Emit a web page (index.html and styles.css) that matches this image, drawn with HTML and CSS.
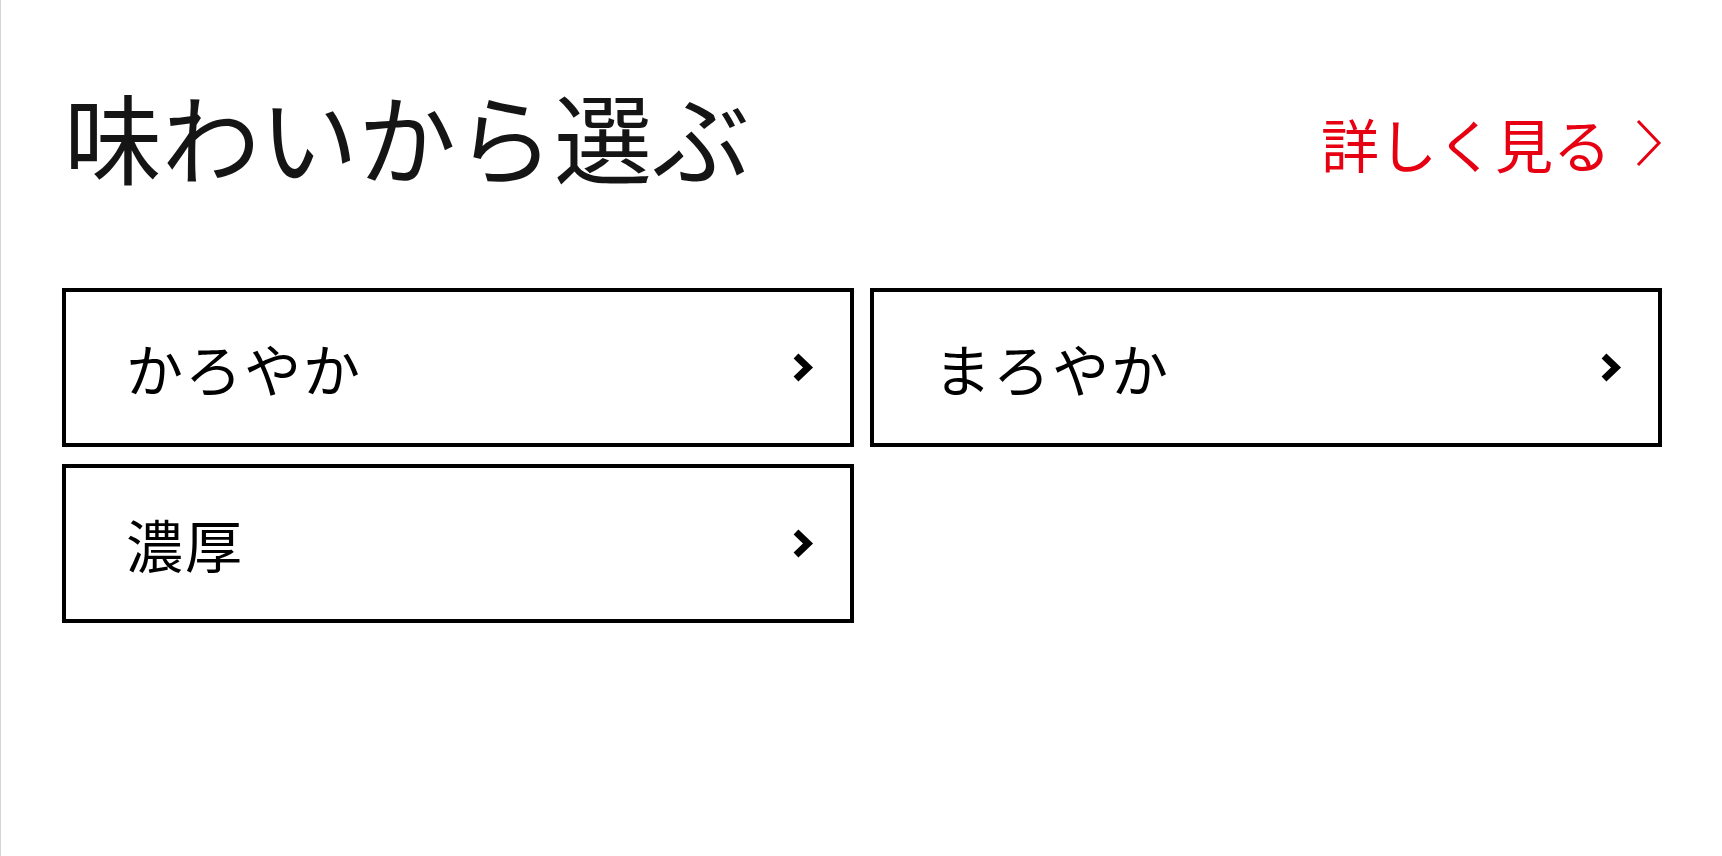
FILE: index.html
```html
<!DOCTYPE html>
<html lang="ja">
<head>
<meta charset="utf-8">
<title>味わいから選ぶ</title>
<link rel="stylesheet" href="styles.css">
</head>
<body>
<div class="page">
  <div class="head">
    <h2 class="title">味わいから選ぶ</h2>
    <a class="more" href="#">詳しく見る<svg class="more-arrow" width="26" height="48" viewBox="0 0 26 48"><polyline points="2,2 23,24 2,46" fill="none" stroke="#e60012" stroke-width="3"/></svg></a>
  </div>
  <div class="grid">
    <a class="card" href="#"><span class="label">かろやか</span><svg class="chev" width="21" height="29" viewBox="0 0 21 29"><polyline points="3,3 15,14.5 3,26" fill="none" stroke="#000" stroke-width="7" stroke-linejoin="miter"/></svg></a>
    <a class="card" href="#"><span class="label">まろやか</span><svg class="chev" width="21" height="29" viewBox="0 0 21 29"><polyline points="3,3 15,14.5 3,26" fill="none" stroke="#000" stroke-width="7" stroke-linejoin="miter"/></svg></a>
    <a class="card" href="#"><span class="label">濃厚</span><svg class="chev" width="21" height="29" viewBox="0 0 21 29"><polyline points="3,3 15,14.5 3,26" fill="none" stroke="#000" stroke-width="7" stroke-linejoin="miter"/></svg></a>
  </div>
</div>
</body>
</html>
```

FILE: styles.css
```css
html, body {
  margin: 0;
  padding: 0;
  background: #fff;
}
body {
  font-family: "Noto Sans CJK JP", "Noto Sans", sans-serif;
}
.page {
  box-sizing: border-box;
  min-height: 856px;
  border-left: 1px solid #d4d4d4;
  padding: 84px 60px 0 61px;
}
.head {
  display: flex;
  justify-content: space-between;
  align-items: center;
  height: 120px;
}
.title {
  margin: 0 0 20px 2px;
  font-size: 98px;
  font-weight: 400;
  line-height: 1;
  color: #151515;
}
.more {
  display: flex;
  align-items: center;
  gap: 25px;
  font-size: 58px;
  line-height: 1;
  color: #e60012;
  text-decoration: none;
  margin-bottom: 2px;
}
.more-arrow {
  display: block;
}
.grid {
  display: grid;
  grid-template-columns: 1fr 1fr;
  column-gap: 16px;
  row-gap: 17px;
  margin-top: 84px;
}
.card {
  box-sizing: border-box;
  height: 159px;
  border: 4px solid #000;
  display: flex;
  align-items: center;
  justify-content: space-between;
  padding: 0 36px 0 60px;
  color: #000;
  text-decoration: none;
}
.label {
  font-size: 57px;
  line-height: 1;
  letter-spacing: 2px;
}
.chev {
  display: block;
}
```
